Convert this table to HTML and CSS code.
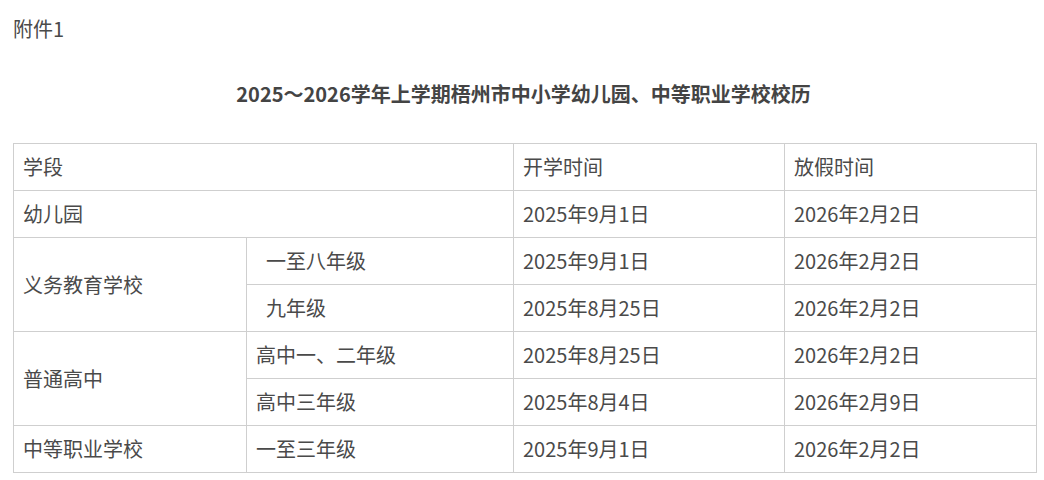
FILE: index.html
```html
<!DOCTYPE html>
<html lang="zh-CN">
<head>
<meta charset="utf-8">
<title>校历</title>
<link rel="stylesheet" href="styles.css">
</head>
<body>
<div class="page">
  <p class="attach">附件1</p>
  <h1 class="title">2025～2026学年上学期梧州市中小学幼儿园、中等职业学校校历</h1>
  <table class="cal">
    <colgroup>
      <col class="c1"><col class="c2"><col class="c3"><col class="c4">
    </colgroup>
    <tbody>
      <tr><td colspan="2">学段</td><td>开学时间</td><td>放假时间</td></tr>
      <tr><td colspan="2">幼儿园</td><td>2025年9月1日</td><td>2026年2月2日</td></tr>
      <tr><td rowspan="2">义务教育学校</td><td class="indent">一至八年级</td><td>2025年9月1日</td><td>2026年2月2日</td></tr>
      <tr><td class="indent">九年级</td><td>2025年8月25日</td><td>2026年2月2日</td></tr>
      <tr><td rowspan="2">普通高中</td><td>高中一、二年级</td><td>2025年8月25日</td><td>2026年2月2日</td></tr>
      <tr><td>高中三年级</td><td>2025年8月4日</td><td>2026年2月9日</td></tr>
      <tr><td>中等职业学校</td><td>一至三年级</td><td>2025年9月1日</td><td>2026年2月2日</td></tr>
    </tbody>
  </table>
</div>
</body>
</html>
```
FILE: styles.css
```css
html, body {
  margin: 0;
  padding: 0;
  background: #fff;
}
body {
  font-family: "Noto Sans CJK SC", "Noto Sans", sans-serif;
  color: #4a4a4a;
}
.page {
  padding: 16px 8px 0 13px;
}
.attach {
  margin: 0;
  font-size: 20px;
  line-height: 26px;
}
.title {
  margin: 38px 0 0 0;
  text-align: center;
  font-size: 20px;
  line-height: 28px;
  font-weight: bold;
  color: #444;
  padding-right: 2px;
}
.cal {
  margin-top: 35px;
  border-collapse: collapse;
  table-layout: fixed;
  width: 1023px;
}
.c1 { width: 233px; }
.c2 { width: 267px; }
.c3 { width: 271px; }
.c4 { width: 252px; }
.cal td {
  border: 1px solid #cfcfcf;
  height: 47px;
  padding: 0 0 0 9px;
  font-size: 20px;
  line-height: 26px;
  vertical-align: middle;
  box-sizing: border-box;
}
.cal td.indent {
  padding-left: 19px;
}
```
